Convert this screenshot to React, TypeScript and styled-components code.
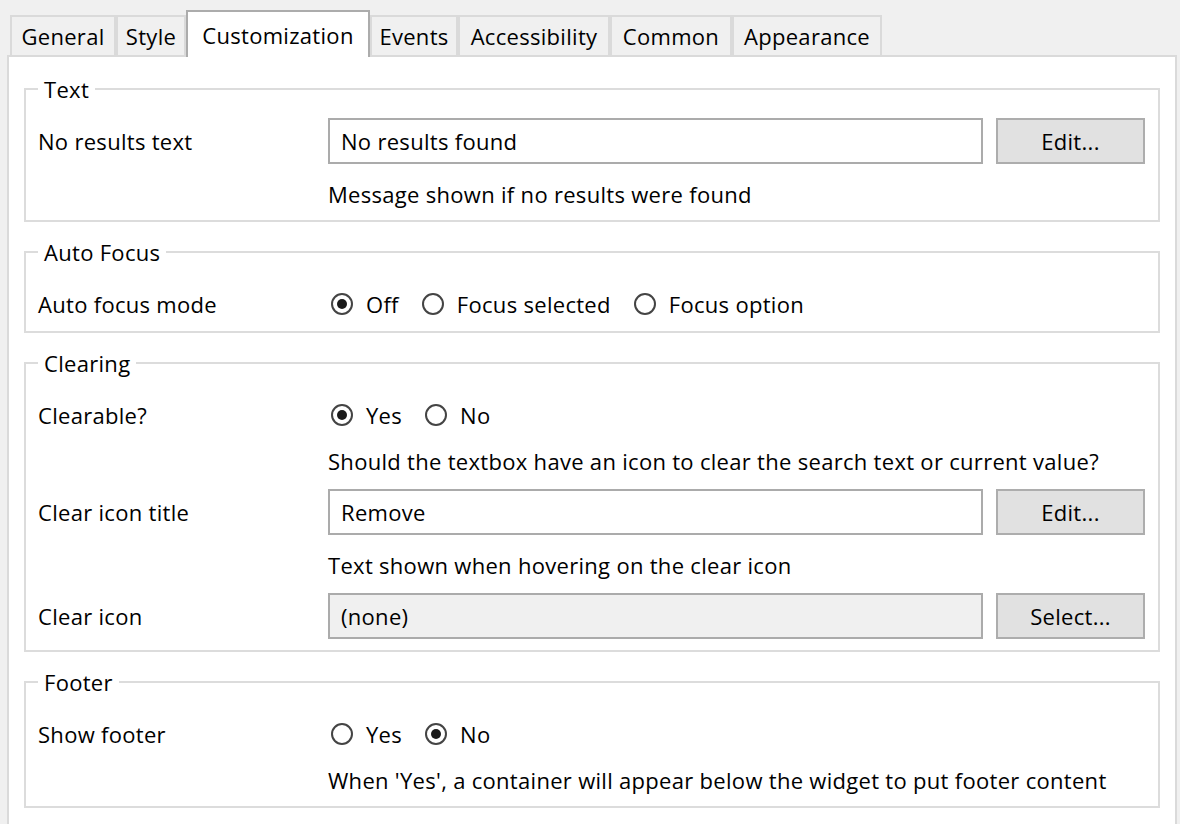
import React from 'react';
import styled, { createGlobalStyle } from 'styled-components';

const Global = createGlobalStyle`
  html, body { margin: 0; padding: 0; background: #f0f0f0; }
  body {
    font-family: "Open Sans", "Noto Sans", sans-serif;
    font-size: 22px;
    letter-spacing: 0.3px;
    color: #000;
  }
  *, *::before, *::after { box-sizing: border-box; }
`;

const Window = styled.div`
  width: 1180px;
  height: 824px;
  overflow: hidden;
  padding: 10px 3px 0 7px;
  display: flex;
  flex-direction: column;
`;

const TabStrip = styled.div`
  display: flex;
  align-items: flex-end;
  height: 45px;
  padding-left: 3px;
  position: relative;
  z-index: 1;
`;

const Tab = styled.div<{ $w: number; $active?: boolean }>`
  width: ${(p) => p.$w}px;
  height: ${(p) => (p.$active ? 47 : 40)}px;
  margin-bottom: ${(p) => (p.$active ? -2 : 0)}px;
  background: ${(p) => (p.$active ? '#ffffff' : '#f0f0f0')};
  border: 2px solid ${(p) => (p.$active ? '#acacac' : '#dadada')};
  border-bottom: none;
  display: flex;
  align-items: center;
  justify-content: center;
  line-height: 28px;
  white-space: nowrap;
`;

const Panel = styled.div`
  flex: 1;
  background: #ffffff;
  border: 2px solid #dadada;
  border-bottom: none;
  padding: 18px 15px 0 15px;
  display: flex;
  flex-direction: column;
  gap: 16px;
`;

const Group = styled.fieldset`
  margin: 0;
  min-width: 0;
  border: 2px solid #dcdcdc;
  padding: 15px 13px 11px 12px;
`;

const Legend = styled.legend`
  padding: 0 6px;
  line-height: 28px;
`;

const GroupBody = styled.div`
  display: flex;
  flex-direction: column;
  gap: 13px;
`;

const FieldRow = styled.div`
  display: grid;
  grid-template-columns: 277px 1fr 149px;
  column-gap: 13px;
  height: 46px;
  align-items: center;
`;

const ChoiceRow = styled.div`
  display: grid;
  grid-template-columns: 290px 1fr;
  height: 39px;
  padding-top: 9px;
  align-items: start;
`;

const Label = styled.div`
  line-height: 28px;
  white-space: nowrap;
`;

const Help = styled.div`
  padding-left: 290px;
  line-height: 30px;
  margin-top: 2px;
  white-space: nowrap;
`;

const TextBox = styled.div<{ $readOnly?: boolean }>`
  height: 46px;
  border: 2px solid #ababab;
  background: ${(p) => (p.$readOnly ? '#f0f0f0' : '#ffffff')};
  padding: 0 11px;
  display: flex;
  align-items: center;
  line-height: 28px;
  white-space: nowrap;
`;

const Button = styled.div`
  height: 46px;
  border: 2px solid #adadad;
  background: #e1e1e1;
  display: flex;
  align-items: center;
  justify-content: center;
  line-height: 28px;
`;

const RadioGroup = styled.div`
  display: flex;
  gap: 23px;
  padding-left: 3px;
`;

const RadioItem = styled.div`
  display: flex;
  align-items: center;
  gap: 13px;
  line-height: 28px;
  white-space: nowrap;
`;

const RadioCircle = styled.span<{ $checked?: boolean }>`
  width: 22px;
  height: 22px;
  flex: none;
  border-radius: 50%;
  border: 2px solid #444444;
  background: #ffffff;
  display: flex;
  align-items: center;
  justify-content: center;
  &::after {
    content: '';
    width: 10px;
    height: 10px;
    border-radius: 50%;
    background: ${(p) => (p.$checked ? '#1a1a1a' : 'transparent')};
  }
`;

const tabs: { label: string; w: number; active?: boolean }[] = [
  { label: 'General', w: 106 },
  { label: 'Style', w: 70 },
  { label: 'Customization', w: 184, active: true },
  { label: 'Events', w: 88 },
  { label: 'Accessibility', w: 152 },
  { label: 'Common', w: 122 },
  { label: 'Appearance', w: 150 },
];

const Radios = ({ options, checked }: { options: string[]; checked: number }) => (
  <RadioGroup>
    {options.map((o, i) => (
      <RadioItem key={o}>
        <RadioCircle $checked={i === checked} />
        {o}
      </RadioItem>
    ))}
  </RadioGroup>
);

export default function App() {
  return (
    <>
      <Global />
      <Window>
        <TabStrip>
          {tabs.map((t) => (
            <Tab key={t.label} $w={t.w} $active={t.active}>
              {t.label}
            </Tab>
          ))}
        </TabStrip>
        <Panel>
          <Group>
            <Legend>Text</Legend>
            <GroupBody>
              <FieldRow>
                <Label>No results text</Label>
                <TextBox>No results found</TextBox>
                <Button>Edit...</Button>
              </FieldRow>
              <Help>Message shown if no results were found</Help>
            </GroupBody>
          </Group>
          <Group>
            <Legend>Auto Focus</Legend>
            <GroupBody>
              <ChoiceRow>
                <Label>Auto focus mode</Label>
                <Radios options={['Off', 'Focus selected', 'Focus option']} checked={0} />
              </ChoiceRow>
            </GroupBody>
          </Group>
          <Group>
            <Legend>Clearing</Legend>
            <GroupBody>
              <ChoiceRow>
                <Label>Clearable?</Label>
                <Radios options={['Yes', 'No']} checked={0} />
              </ChoiceRow>
              <Help>Should the textbox have an icon to clear the search text or current value?</Help>
              <FieldRow>
                <Label>Clear icon title</Label>
                <TextBox>Remove</TextBox>
                <Button>Edit...</Button>
              </FieldRow>
              <Help>Text shown when hovering on the clear icon</Help>
              <FieldRow>
                <Label>Clear icon</Label>
                <TextBox $readOnly>(none)</TextBox>
                <Button>Select...</Button>
              </FieldRow>
            </GroupBody>
          </Group>
          <Group>
            <Legend>Footer</Legend>
            <GroupBody>
              <ChoiceRow>
                <Label>Show footer</Label>
                <Radios options={['Yes', 'No']} checked={1} />
              </ChoiceRow>
              <Help>When 'Yes', a container will appear below the widget to put footer content</Help>
            </GroupBody>
          </Group>
        </Panel>
      </Window>
    </>
  );
}
